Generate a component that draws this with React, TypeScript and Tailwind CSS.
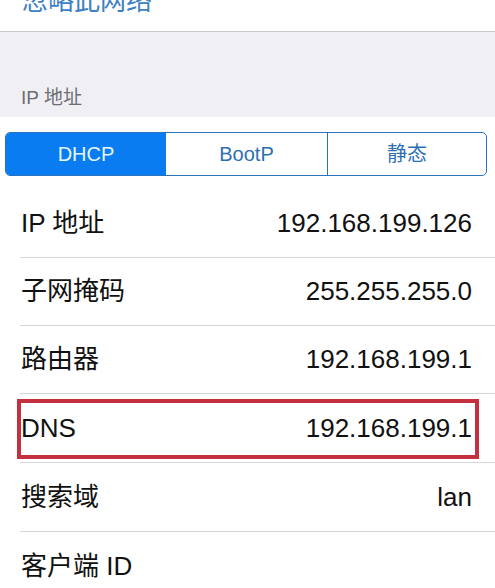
const font = { fontFamily: '"Liberation Sans", "Noto Sans CJK SC", sans-serif' };

const rows = [
  { label: 'IP 地址', value: '192.168.199.126', h: 'h-[68px]' },
  { label: '子网掩码', value: '255.255.255.0', h: 'h-[68px]' },
  { label: '路由器', value: '192.168.199.1', h: 'h-[68px]' },
  { label: 'DNS', value: '192.168.199.1', h: 'h-[69px]', marked: true },
  { label: '搜索域', value: 'lan', h: 'h-[69px]' },
  { label: '客户端 ID', value: '', h: 'h-[69px]' },
];

export default function App() {
  return (
    <div className="w-[495px] h-[588px] overflow-hidden bg-white" style={font}>
      <div className="h-[32px] overflow-hidden border-b border-[#c8c7cc] px-[22px]">
        <p className="text-[26px] leading-[26px] -mt-[12px] text-[#3d80c4]">忽略此网络</p>
      </div>

      <div className="h-[85px] bg-[#efeff4] flex items-end px-[21px] pb-[10px]">
        <p className="text-[19px] leading-none text-[#6d6d72]">IP 地址</p>
      </div>

      <div className="pt-[15px] pb-[14px] pl-[5px] pr-[8px]">
        <div className="h-[44px] flex rounded-[5px] border border-[#2a72c0] overflow-hidden text-[20px]">
          <div className="w-[160px] flex items-center justify-center bg-[#0a7cf2] text-[#e4f6ff]">DHCP</div>
          <div className="w-[162px] flex items-center justify-center border-r border-[#2a72c0] text-[#2c6fb2]">BootP</div>
          <div className="flex-1 flex items-center justify-center text-[#2c6fb2]">静态</div>
        </div>
      </div>

      <div>
        {rows.map(r => (
          <div key={r.label} className={`relative pl-[20px] ${r.h}`}>
            <div className="h-full flex items-center justify-between pl-px pr-[23px] border-b border-[#d6d6da] text-[26px] text-[#111]">
              <span>{r.label}</span>
              <span>{r.value}</span>
            </div>
            {r.marked && (
              <div className="absolute left-[17px] right-[16px] top-[5px] bottom-[4px] border-4 border-[#c52f40]" />
            )}
          </div>
        ))}
      </div>
    </div>
  );
}
